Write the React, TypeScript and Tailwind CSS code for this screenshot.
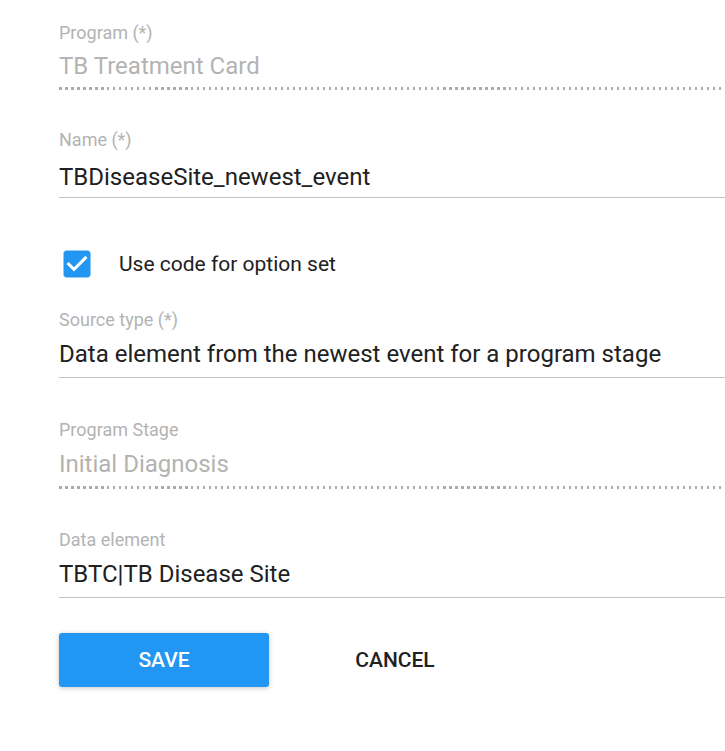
import React from "react";

const font = { fontFamily: "Roboto, 'Noto Sans', sans-serif" };

function Label({ children }: { children: React.ReactNode }) {
  return <div className="text-[18px] leading-[24px] text-[#b3b3b3]">{children}</div>;
}

function Dotted() {
  return (
    <div className="h-[3px] w-full bg-[repeating-linear-gradient(to_right,#ababab_0,#ababab_2.5px,transparent_2.5px,transparent_6px)]" />
  );
}

function Solid() {
  return <div className="h-px w-full bg-[#c2c2c2]" />;
}

export default function App() {
  return (
    <div style={font} className="min-h-[751px] w-[725px] overflow-hidden bg-white pl-[59px] pt-[21px]">
      {/* Program */}
      <div>
        <Label>Program (*)</Label>
        <div className="mt-[3px] text-[24px] leading-[36px] text-[#b3b3b3]">TB Treatment Card</div>
        <div className="mt-[3px]">
          <Dotted />
        </div>
      </div>

      {/* Name */}
      <div className="mt-[38px]">
        <Label>Name (*)</Label>
        <div className="mt-[7px] text-[24px] leading-[36px] text-[#212121]">TBDiseaseSite_newest_event</div>
        <div className="mt-[2px]">
          <Solid />
        </div>
      </div>

      {/* Checkbox */}
      <div className="mt-[52px] flex h-[28px] items-center">
        <div className="relative h-[28px] w-[32px]">
          <svg
            viewBox="0 0 24 24"
            width="36"
            height="36"
            className="absolute left-[-0.5px] top-[-4.5px]"
          >
            <path
              fill="#2196F3"
              d="M19 3H5c-1.11 0-2 .9-2 2v14c0 1.1.89 2 2 2h14c1.11 0 2-.9 2-2V5c0-1.1-.89-2-2-2z"
            />
            <path fill="#ffffff" d="M10 17l-5-5 1.41-1.41L10 14.17l7.59-7.59L19 8l-9 9z" />
          </svg>
        </div>
        <div className="ml-[28px] text-[21px] leading-[28px] text-[#212121]">Use code for option set</div>
      </div>

      {/* Source type */}
      <div className="mt-[30px]">
        <Label>Source type (*)</Label>
        <div className="mt-[4px] whitespace-nowrap text-[24px] leading-[36px] text-[#212121]">
          Data element from the newest event for a program stage
        </div>
        <div className="mt-[5px]">
          <Solid />
        </div>
      </div>

      {/* Program Stage */}
      <div className="mt-[40px]">
        <Label>Program Stage</Label>
        <div className="mt-[4px] text-[24px] leading-[36px] text-[#b3b3b3]">Initial Diagnosis</div>
        <div className="mt-[4px]">
          <Dotted />
        </div>
      </div>

      {/* Data element */}
      <div className="mt-[39px]">
        <Label>Data element</Label>
        <div className="mt-[4px] text-[24px] leading-[36px] text-[#212121]">TBTC|TB Disease Site</div>
        <div className="mt-[5px]">
          <Solid />
        </div>
      </div>

      {/* Buttons */}
      <div className="mt-[35px] flex items-center">
        <button className="h-[54px] w-[210px] rounded-[3px] bg-[#2196F3] pt-[2px] text-[21px] font-medium uppercase text-white shadow-[0_1px_6px_rgba(0,0,0,0.12),0_1px_4px_rgba(0,0,0,0.12)]">
          Save
        </button>
        <button className="ml-[51px] h-[54px] w-[150px] rounded-[3px] pt-[2px] text-[21px] font-medium uppercase text-[#212121]">
          Cancel
        </button>
      </div>
    </div>
  );
}
